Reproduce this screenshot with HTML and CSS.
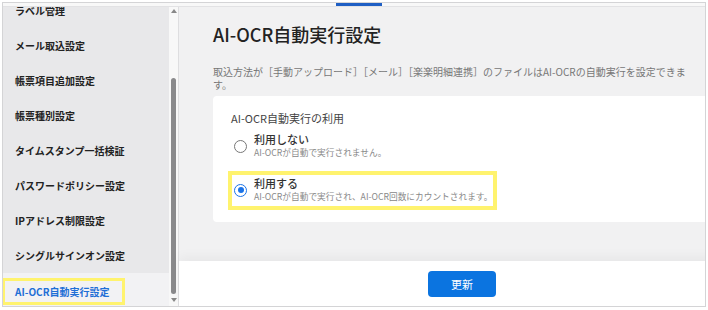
FILE: index.html
```html
<!DOCTYPE html>
<html lang="ja">
<head>
    <meta charset="UTF-8">
    <meta name="viewport" content="width=device-width, initial-scale=1.0">
    <title>AI-OCR自動実行設定</title>
    <link rel="stylesheet" href="styles.css">
</head>
<body>

<div class="marco">
    <div class="barra-superior">
        <div class="pestana-activa"></div>
    </div>

    <div class="cuerpo">
        <div class="menu-lateral">
            <div class="lista-menu">
                <div class="item-menu">ラベル管理</div>
                <div class="item-menu">メール取込設定</div>
                <div class="item-menu">帳票項目追加設定</div>
                <div class="item-menu">帳票種別設定</div>
                <div class="item-menu">タイムスタンプ一括検証</div>
                <div class="item-menu">パスワードポリシー設定</div>
                <div class="item-menu">IPアドレス制限設定</div>
                <div class="item-menu">シングルサインオン設定</div>
                <div class="item-menu activo">
                    <span class="resaltado-menu">AI-OCR自動実行設定</span>
                </div>
            </div>
        </div>

        <div class="barra-scroll">
            <div class="flecha arriba"></div>
            <div class="pulgar"></div>
            <div class="flecha abajo"></div>
        </div>

        <div class="principal">
            <div class="contenido">
                <h1 class="titulo">AI-OCR自動実行設定</h1>
                <p class="descripcion">取込方法が［手動アップロード］［メール］［楽楽明細連携］のファイルはAI-OCRの自動実行を設定できます。</p>

                <div class="tarjeta">
                    <div class="etiqueta">AI-OCR自動実行の利用</div>

                    <div class="opcion">
                        <span class="radio"></span>
                        <div class="texto-opcion">
                            <div class="nombre-opcion">利用しない</div>
                            <div class="nota-opcion">AI-OCRが自動で実行されません。</div>
                        </div>
                    </div>

                    <div class="opcion resaltado">
                        <span class="radio marcado"></span>
                        <div class="texto-opcion">
                            <div class="nombre-opcion">利用する</div>
                            <div class="nota-opcion">AI-OCRが自動で実行され、AI-OCR回数にカウントされます。</div>
                        </div>
                    </div>
                </div>
            </div>

            <div class="pie">
                <button class="boton">更新</button>
            </div>
        </div>
    </div>
</div>

</body>
</html>
```

FILE: styles.css
```css
body {
    margin: 0;
    padding: 0;
    background-color: white;
    font-family: "Noto Sans CJK JP", "Noto Sans", sans-serif;
}
.marco {
    margin: 2px 0 0 2px;
    width: 702px;
    height: 303px;
    border: 1px solid #d4d4d6;
    overflow: hidden;
}
.barra-superior {
    height: 3px;
    background-color: #f8f8f8;
    border-bottom: 1px solid #e2e2e4;
}
.pestana-activa {
    margin-left: 333px;
    width: 46px;
    height: 3px;
    background-color: #1f5fc4;
}
.cuerpo {
    display: flex;
    height: 299px;
}
.menu-lateral {
    width: 166px;
    flex-shrink: 0;
    background-color: #e8e8ea;
    overflow: hidden;
}
.lista-menu {
    margin-top: -14px;
}
.item-menu {
    height: 35px;
    padding-left: 12px;
    display: flex;
    align-items: center;
    font-size: 10px;
    font-weight: 700;
    color: #222;
}
.item-menu.activo {
    background-color: #f2f2f4;
    color: #1f6fd6;
}
.resaltado-menu {
    display: flex;
    align-items: center;
    box-sizing: border-box;
    width: 123px;
    height: 27px;
    margin-left: -13px;
    margin-top: 1px;
    padding-left: 10px;
    border: 3px solid #fff36e;
}
.barra-scroll {
    width: 9px;
    flex-shrink: 0;
    background-color: #f8f8f8;
    border-right: 1px solid #dedee0;
    display: flex;
    flex-direction: column;
    align-items: center;
}
.flecha {
    width: 0;
    height: 0;
    border-left: 3px solid transparent;
    border-right: 3px solid transparent;
}
.flecha.arriba {
    margin-top: 2px;
    border-bottom: 4px solid #888;
}
.flecha.abajo {
    margin-top: auto;
    margin-bottom: 4px;
    border-top: 4px solid #888;
}
.pulgar {
    margin-top: 65px;
    width: 5px;
    height: 216px;
    border-radius: 3px;
    background-color: #8a8a8c;
}
.principal {
    width: 566px;
    flex-shrink: 0;
    display: flex;
    flex-direction: column;
    background-color: #f1f1f2;
}
.contenido {
    flex: 1;
    padding: 15px 34px 0 34px;
}
.titulo {
    margin: 0;
    font-size: 18px;
    line-height: 24px;
    font-weight: 500;
    color: #222;
}
.descripcion {
    margin: 19px 0 0 0;
    max-width: 476px;
    font-size: 10px;
    line-height: 13px;
    color: #777;
}
.tarjeta {
    margin-top: 5px;
    padding: 16px 18px 12px 18px;
    background-color: white;
    border-radius: 4px;
}
.etiqueta {
    font-size: 11px;
    line-height: 13px;
    color: #444;
    margin-bottom: 7px;
}
.opcion {
    display: flex;
    align-items: center;
    padding-left: 3px;
    white-space: nowrap;
}
.opcion.resaltado {
    width: 269px;
    box-sizing: border-box;
    margin: 11px 0 0 -3px;
    padding: 1px 0 2px 2px;
    border: 4px solid #fff36e;
}
.radio {
    width: 13px;
    height: 13px;
    box-sizing: border-box;
    border: 1.5px solid #777;
    border-radius: 50%;
    background-color: white;
    margin-right: 7px;
    flex-shrink: 0;
    display: flex;
    align-items: center;
    justify-content: center;
}
.radio.marcado {
    border-color: #1a73e8;
}
.radio.marcado::after {
    content: "";
    width: 6px;
    height: 6px;
    border-radius: 50%;
    background-color: #1a73e8;
}
.nombre-opcion {
    font-size: 11px;
    line-height: 14px;
    font-weight: 500;
    color: #333;
}
.nota-opcion {
    font-size: 8.7px;
    line-height: 14px;
    color: #888;
}
.pie {
    height: 45px;
    flex-shrink: 0;
    display: flex;
    align-items: center;
    justify-content: center;
    background-color: white;
    box-shadow: 0 -5px 10px rgba(0, 0, 0, 0.04);
}
.boton {
    width: 68px;
    height: 26px;
    border: none;
    border-radius: 4px;
    background-color: #0b74e0;
    color: white;
    font-family: "Noto Sans CJK JP", "Noto Sans", sans-serif;
    font-size: 11px;
    cursor: pointer;
}
```
